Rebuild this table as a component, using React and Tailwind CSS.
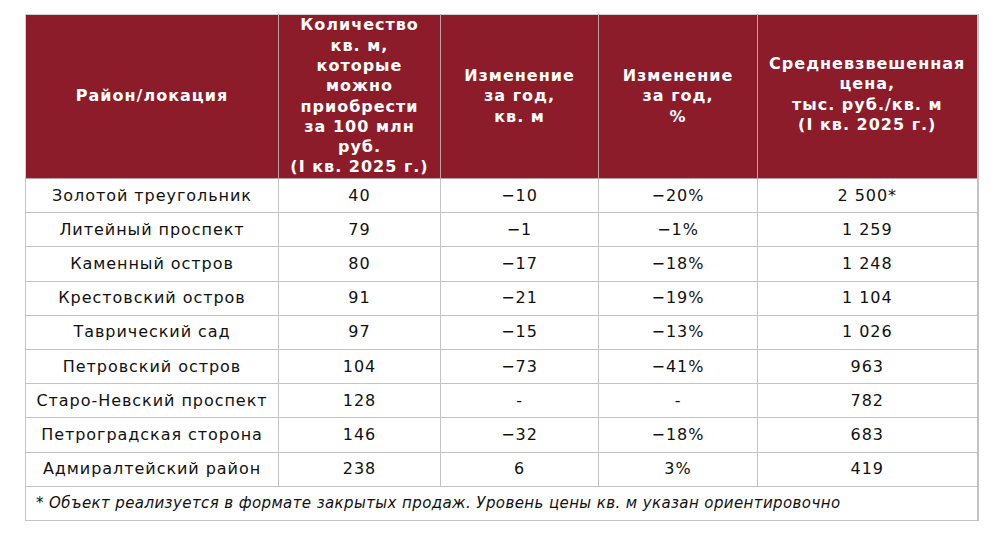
import React from "react";

const rows = [
  ["Золотой треугольник", "40", "\u221210", "\u221220%", "2 500*"],
  ["Литейный проспект", "79", "\u22121", "\u22121%", "1 259"],
  ["Каменный остров", "80", "\u221217", "\u221218%", "1 248"],
  ["Крестовский остров", "91", "\u221221", "\u221219%", "1 104"],
  ["Таврический сад", "97", "\u221215", "\u221213%", "1 026"],
  ["Петровский остров", "104", "\u221273", "\u221241%", "963"],
  ["Старо-Невский проспект", "128", "-", "-", "782"],
  ["Петроградская сторона", "146", "\u221232", "\u221218%", "683"],
  ["Адмиралтейский район", "238", "6", "3%", "419"],
];

export default function App() {
  return (
    <div className="w-[1000px] h-[537px] bg-white pt-[14px] pl-[25px]" style={{ fontFamily: '"DejaVu Sans", sans-serif' }}>
      <table className="border-collapse table-fixed w-[952px] border-r-2 border-[#c4c4c4]">
        <colgroup>
          <col className="w-[253px]" />
          <col className="w-[162px]" />
          <col className="w-[158px]" />
          <col className="w-[159px]" />
          <col className="w-[220px]" />
        </colgroup>
        <thead>
          <tr className="bg-[#8c1c2a] text-white font-bold text-[16px] leading-[20.3px] tracking-[1px]">
            <th className="h-[164px] border border-[#bfa0a4] border-t-[#d0d0d0] border-l-[#d0d0d0] align-middle px-0">Район/локация</th>
            <th className="h-[164px] border border-[#bfa0a4] border-t-[#d0d0d0] align-middle px-0">
              Количество<br />кв. м,<br />которые<br />можно<br />приобрести<br />за 100 млн<br />руб.<br />(I кв. 2025 г.)
            </th>
            <th className="border border-[#bfa0a4] border-t-[#d0d0d0] align-middle px-0">Изменение<br />за год,<br />кв. м</th>
            <th className="border border-[#bfa0a4] border-t-[#d0d0d0] align-middle px-0">Изменение<br />за год,<br />%</th>
            <th className="border border-[#bfa0a4] border-t-[#d0d0d0] align-middle px-0 pb-[4px]">
              Средневзвешенная<br />цена,<br />тыс. руб./кв. м<br />(I кв. 2025 г.)
            </th>
          </tr>
        </thead>
        <tbody className="text-[16px] text-[#111] tracking-[0.95px]">
          {rows.map((r, i) => (
            <tr key={i} className="h-[34.2px]">
              {r.map((c, j) => (
                <td key={j} className="border border-[#c4c4c4] text-center align-middle p-0 leading-[20px]">{c}</td>
              ))}
            </tr>
          ))}
          <tr className="h-[34px]">
            <td colSpan={5} className="border border-[#c4c4c4] text-left italic text-[15px] tracking-[0.4px] pl-[10px] text-[#111] align-middle">
              * Объект реализуется в формате закрытых продаж. Уровень цены кв. м указан ориентировочно
            </td>
          </tr>
        </tbody>
      </table>
    </div>
  );
}
